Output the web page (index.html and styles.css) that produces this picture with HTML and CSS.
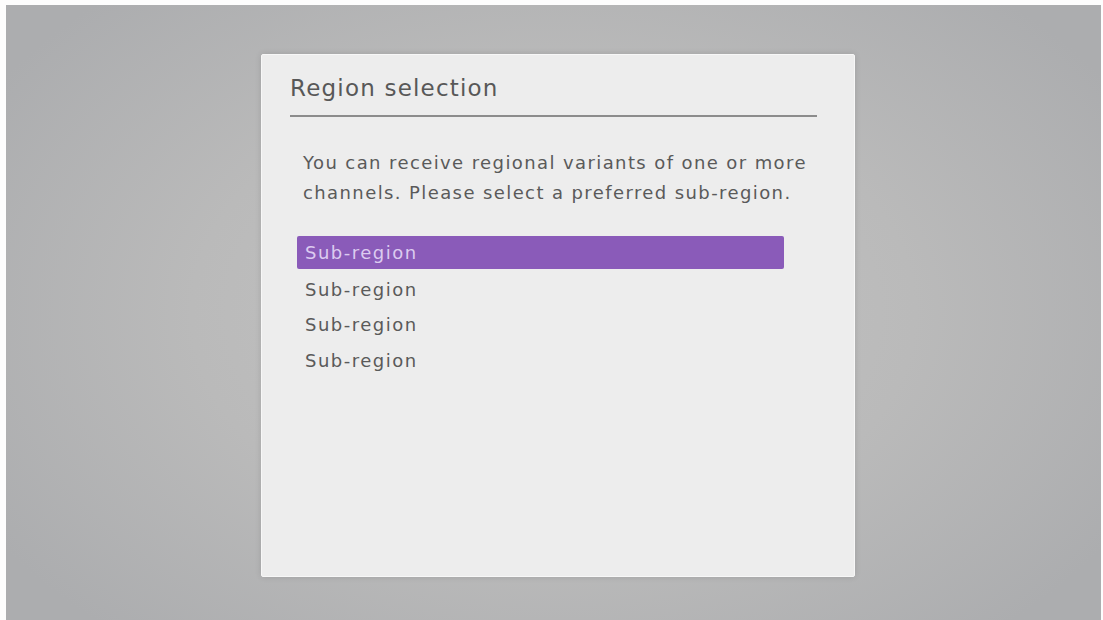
FILE: index.html
```html
<!DOCTYPE html>
<html lang="en">
<head>
    <meta charset="UTF-8">
    <meta name="viewport" content="width=device-width, initial-scale=1.0">
    <title>Region selection</title>
    <link rel="stylesheet" href="styles.css">
</head>
<body>
    <div class="screen">
        <div class="dialog">
            <h1 class="dialog-title">Region selection</h1>
            <p class="dialog-text">You can receive regional variants of one or more channels. Please select a preferred sub-region.</p>
            <ul class="region-list">
                <li class="region-item selected">Sub-region</li>
                <li class="region-item">Sub-region</li>
                <li class="region-item">Sub-region</li>
                <li class="region-item">Sub-region</li>
            </ul>
        </div>
    </div>
</body>
</html>
```

FILE: styles.css
```css
* {
    box-sizing: border-box;
    margin: 0;
    padding: 0;
    font-family: "DejaVu Sans", "Noto Sans", sans-serif;
}

body {
    background-color: #fdfdfd;
    height: 620px;
    overflow: hidden;
}

.screen {
    margin: 5px 2px 0 6px;
    height: 615px;
    background: radial-gradient(ellipse 60% 70% at 50% 50%, #c4c4c4 0%, #bababa 55%, #acadaf 100%);
    padding-top: 49px;
    padding-left: 255px;
}

.dialog {
    width: 594px;
    height: 523px;
    background-color: #ededed;
    border: 1px solid #f7f7f7;
    border-radius: 2px;
    box-shadow: 0 0 6px rgba(0, 0, 0, 0.12);
    padding: 20px 37px 0 28px;
}

.dialog-title {
    font-size: 23px;
    font-weight: normal;
    color: #585858;
    letter-spacing: 1.2px;
    padding-bottom: 14px;
    border-bottom: 2px solid #8c8c8c;
}

.dialog-text {
    font-size: 18px;
    line-height: 30px;
    color: #5a5a5a;
    letter-spacing: 1.4px;
    margin: 31px 0 0 13px;
    width: 515px;
}

.region-list {
    list-style: none;
    margin: 28px 0 0 7px;
    width: 487px;
}

.region-item {
    height: 35.5px;
    line-height: 35px;
    padding-left: 8px;
    font-size: 18px;
    color: #5a5a5a;
    letter-spacing: 1.5px;
}

.region-item.selected {
    height: 33px;
    line-height: 33px;
    margin-bottom: 2.5px;
    background-color: #8a5bb9;
    color: #dccbf0;
    border-radius: 2px;
}
```
